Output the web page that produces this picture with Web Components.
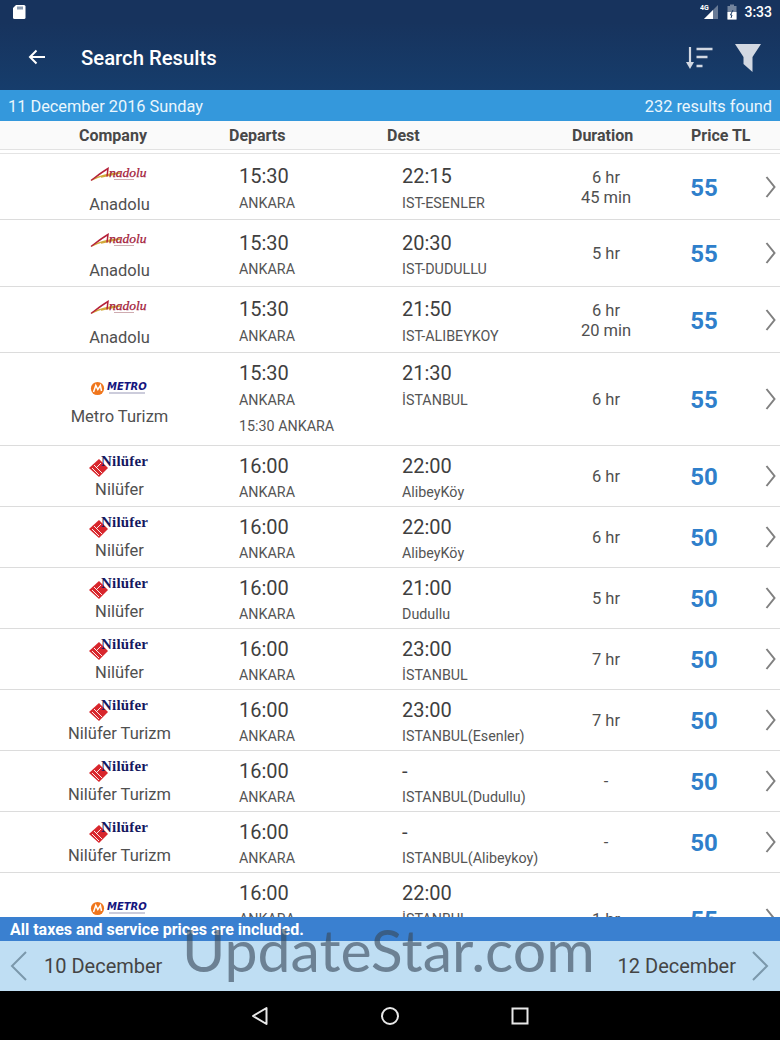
<!DOCTYPE html>
<html><head><meta charset="utf-8">
<style>
html,body{margin:0;padding:0;height:100%;background:#fff;font-family:Roboto,"Liberation Sans",sans-serif}
results-app{width:780px;height:1040px}
</style></head><body>
<results-app></results-app>
<script>
function def(name, css, html, setup){
  customElements.define(name, class extends HTMLElement{
    connectedCallback(){
      if(this.shadowRoot) return;
      const s=this.attachShadow({mode:'open'});
      const a=n=>this.getAttribute(n)??'';
      s.innerHTML='<style>'+css+'</style>'+(typeof html==='function'?html(a):html);
      if(setup) setup(s,this);
    }
  });
}
const logos={
 anadolu:`<svg width="62" height="20" viewBox="0 0 62 20"><path d="M3 15C12 10 20 8.500 31 8L12 12" fill="none" stroke="#d2a93a" stroke-width="1.300"/><path d="M2 15.500C8 11 13 7 19 3.500l-1 8" fill="none" stroke="#b5213a" stroke-width="1.500"/><text x="20" y="12" font-family="Liberation Serif" font-style="italic" font-size="13.500" fill="#a3203a" stroke="#a3203a" stroke-width=".25">nadolu</text><rect x="25" y="14" width="20" height=".9" fill="#c9a2a8"/></svg>`,
 metro:`<svg width="60" height="20" viewBox="0 0 60 20"><circle cx="7.500" cy="9.500" r="6.600" fill="#f0761c"/><path d="M3.500 13l2.300-6.500 2 4 2.600-4L11.500 12" fill="none" stroke="#fff" stroke-width="1.500"/><text x="17" y="11" font-family="DejaVu Sans" font-style="italic" font-weight="700" font-size="10" fill="#15157e">METRO</text><rect x="19" y="13.500" width="36" height="1" fill="#9a9ab8"/></svg>`,
 nilufer:`<svg width="64" height="30" viewBox="0 -4 64 30"><path d="M1 13L11 4l9 9-9 9z" fill="#d8262c"/><path d="M6 10l8 8M4 13l7 7M13 8l-5 5" stroke="#fff" stroke-width=".9"/><text x="13" y="10.500" font-family="Liberation Serif" font-weight="700" font-size="15" fill="#16185f" letter-spacing=".2">Nilüfer</text></svg>`
};
def('status-bar',`:host{display:flex;align-items:center;height:24px;padding:0 8px 0 12px;color:#fff;font-size:14px;font-weight:500}
 .sp{flex:1}svg{display:block}.b{margin-left:8px;margin-right:7px}`,
 `<svg width="14" height="16" viewBox="0 0 14 16"><path d="M4 1h8a1.500 1.500 0 0 1 1.500 1.500v11A1.500 1.500 0 0 1 12 15H2.500A1.500 1.500 0 0 1 1 13.500V4z" fill="#fff"/><path d="M6 2.500v3M8 2.500v3M10 2.500v3" stroke="#1a3a64" stroke-width="1"/></svg>
 <span class="sp"></span>
 <svg width="19" height="16" viewBox="0 0 19 16"><path d="M18 1v14H4z" fill="#fff" opacity=".35"/><path d="M13 6v9H4z" fill="#fff"/><text x="0" y="6" font-family="Roboto" font-size="7" font-weight="700" fill="#fff">4G</text></svg>
 <svg class="b" width="10" height="16" viewBox="0 0 10 16"><path d="M3 .5h4V2h2.500v13.500H.5V2H3z" fill="#fff" opacity=".4"/><path d="M.5 8h9v7.500h-9z" fill="#fff"/><path d="M6 6L3.500 11H5l-1 3" fill="none" stroke="#1a3a64" stroke-width="1"/></svg><span>3:33</span>`);
def('app-bar',`:host{display:flex;align-items:center;height:66px;padding:0 0 0 27px;color:#fff}
 .t{margin-left:34px;font-size:20.300px;font-weight:500;flex:1;position:relative;top:1px}
 svg{display:block}.s{margin-right:22px;position:relative;top:1px}.f{margin-right:19px;position:relative;top:1px}`,
 `<svg width="20" height="18" viewBox="0 0 20 18"><path d="M18 9H3M9.500 2.500L3 9l6.500 6.500" fill="none" stroke="#fff" stroke-width="2"/></svg>
 <span class="t">Search Results</span>
 <svg class="s" width="28" height="24" viewBox="0 0 28 24"><path d="M5 1v17" stroke="#d2d8e2" stroke-width="2.200"/><path d="M1 16h8l-4 7z" fill="#d2d8e2"/><path d="M11.500 3h16M11.500 11h11M11.500 20h6" stroke="#d2d8e2" stroke-width="2.600"/></svg>
 <svg class="f" width="26" height="30" viewBox="0 0 26 30"><path d="M0 1h26L17.500 14v15l-9-8V14z" fill="#d2d8e2"/></svg>`);
def('top-chrome',`:host{display:block;background:linear-gradient(#17335d 0,#17335d 22px,#163d6c 100%);}`,`<slot></slot>`);
def('date-bar',`:host{display:flex;justify-content:space-between;align-items:center;height:31px;box-sizing:border-box;padding:1px 8px 0;background:#3498dc;color:#eaf6fd;font-size:16.350px}`,
 a=>`<span>${a('date')}</span><span>${a('count')}</span>`);
def('col-header',`:host{display:grid;grid-template-columns:150px 158px 185px 119px auto;box-sizing:content-box;padding:1px 0 0 79px;height:27px;align-items:center;background:#fafafa;color:#484848;font-size:16px;font-weight:700;white-space:nowrap;border-bottom:1px solid #e2e2e2;margin-bottom:3px}`,
 `<span>Company</span><span>Departs</span><span>Dest</span><span>Duration</span><span>Price TL</span>`);
def('trip-row',`:host{display:grid;grid-template-columns:239px 163px 150px 108px 88px 32px;border-top:1px solid #dcdcdc;color:#444;box-sizing:border-box;overflow:hidden}
 :host([first]){border-top:1px solid #e4e4e4}
 .co{display:flex;flex-direction:column;align-items:center;font-size:16.500px;color:#505050;white-space:nowrap}
 .logo{height:20px;display:flex;align-items:center;margin-top:var(--lt,8px)}
 .nm{margin-top:var(--nt,11px);line-height:20px}
 .tm{font-size:20px;line-height:24px;margin-top:var(--tt,11px);color:#3f3f3f}
 .sb{font-size:14.300px;line-height:18px;margin-top:var(--sbt,5px);color:#555}
 .ex{font-size:14.300px;line-height:18px;margin-top:8px;color:#555}
 .du{display:flex;align-items:center;justify-content:center;text-align:center;font-size:16.500px;line-height:20px;color:#505050;padding-top:2px}
 .pr{display:flex;align-items:center;justify-content:center;font-size:24px;font-weight:700;color:#2f7fcb;padding-top:2px}
 .ch{display:flex;align-items:center;justify-content:flex-end;padding-right:4px}
 svg{display:block}`,
 a=>`<div class="co"><div class="logo">${logos[a('logo')]}</div><div class="nm">${a('name')}</div></div>
 <div><div class="tm">${a('dep')}</div><div class="sb">${a('from')}</div>${a('extra')?`<div class="ex">${a('extra')}</div>`:''}</div>
 <div><div class="tm">${a('arr')}</div><div class="sb">${a('to')}</div></div>
 <div class="du"><span>${a('dur')}</span></div>
 <div class="pr">${a('price')}</div>
 <div class="ch"><svg width="11" height="22" viewBox="0 0 11 22"><path d="M1.500 1L9.500 11l-8 10" fill="none" stroke="#808080" stroke-width="2"/></svg></div>`,
 (s,h)=>{
   const H=+h.getAttribute('h');
   h.style.height=H+'px';
   h.style.setProperty('--tt',(h.getAttribute('tt')||8)+'px');
   h.style.setProperty('--sbt',(h.getAttribute('sbt')||5)+'px');
   h.style.setProperty('--lt',H>=90?'26px':H>=66?'11px':'10px');
   h.style.setProperty('--nt',H>=90?'8px':H>=66?'10px':'4px');
 });
def('result-list',`:host{display:block;flex:1;min-height:0;overflow:hidden;background:#fff}`,`<slot></slot>`);
def('tax-note',`:host{display:flex;align-items:center;height:24px;padding:0 10px;background:#3a80d0;color:#fff;font-size:16px;font-weight:700}`,`<slot></slot>`);
def('day-nav',`:host{display:flex;align-items:center;height:50px;background:#bfdef3;color:#444;font-size:20px;padding:0 11px 0 10px}
 svg{display:block}.l{margin-left:17px;flex:1;white-space:nowrap}.r{margin-right:16px}`,
 a=>`<svg width="17" height="30" viewBox="0 0 17 30"><path d="M16 1L2 15l14 14" fill="none" stroke="#7b98ab" stroke-width="2"/></svg>
 <span class="l">${a('prev')}</span><span class="r">${a('next')}</span>
 <svg width="17" height="30" viewBox="0 0 17 30"><path d="M1 1l14 14L1 29" fill="none" stroke="#7b98ab" stroke-width="2"/></svg>`);
def('nav-bar',`:host{display:flex;align-items:center;justify-content:center;gap:111px;height:49px;background:#000}
 svg{display:block}`,
 `<svg width="18" height="20" viewBox="0 0 18 20"><path d="M15.500 2v16L2 10z" fill="none" stroke="#e8e8e8" stroke-width="2" stroke-linejoin="round"/></svg>
 <svg width="20" height="20" viewBox="0 0 20 20"><circle cx="10" cy="10" r="8" fill="none" stroke="#e8e8e8" stroke-width="2"/></svg>
 <svg width="18" height="18" viewBox="0 0 18 18"><rect x="1.500" y="1.500" width="15" height="15" fill="none" stroke="#e8e8e8" stroke-width="2"/></svg>`);
def('water-mark',`:host{position:absolute;left:182px;top:908px;font-family:Lato,sans-serif;font-size:59px;line-height:84px;color:rgba(56,72,88,.62);white-space:nowrap;pointer-events:none}`,`<slot></slot>`);
const rows=[
 ['anadolu','Anadolu','15:30','ANKARA','22:15','IST-ESENLER','6 hr<br>45 min','55',66,'first',10,'',6],
 ['anadolu','Anadolu','15:30','ANKARA','20:30','IST-DUDULLU','5 hr','55',67,'',11,'',5],
 ['anadolu','Anadolu','15:30','ANKARA','21:50','IST-ALIBEYKOY','6 hr<br>20 min','55',66,'',10,'',6],
 ['metro','Metro Turizm','15:30','ANKARA','21:30','İSTANBUL','6 hr','55',93,'',8,'15:30 ANKARA',6],
 ['nilufer','Nilüfer','16:00','ANKARA','22:00','AlibeyKöy','6 hr','50',61,'',8],
 ['nilufer','Nilüfer','16:00','ANKARA','22:00','AlibeyKöy','6 hr','50',61,'',8],
 ['nilufer','Nilüfer','16:00','ANKARA','21:00','Dudullu','5 hr','50',61,'',8],
 ['nilufer','Nilüfer','16:00','ANKARA','23:00','İSTANBUL','7 hr','50',61,'',8],
 ['nilufer','Nilüfer Turizm','16:00','ANKARA','23:00','ISTANBUL(Esenler)','7 hr','50',61,'',8],
 ['nilufer','Nilüfer Turizm','16:00','ANKARA','-','ISTANBUL(Dudullu)','-','50',61,'',8],
 ['nilufer','Nilüfer Turizm','16:00','ANKARA','-','ISTANBUL(Alibeykoy)','-','50',61,'',8],
 ['metro','Metro Turizm','16:00','ANKARA','22:00','İSTANBUL','1 hr','55',93,'',8],
];
const attr=s=>String(s).replace(/"/g,'&quot;');
const rowsHtml=rows.map(r=>`<trip-row logo="${r[0]}" name="${r[1]}" dep="${r[2]}" from="${r[3]}" arr="${r[4]}" to="${r[5]}" dur="${attr(r[6])}" price="${r[7]}" h="${r[8]}" ${r[9]||''} tt="${r[10]}" sbt="${r[12]||5}" extra="${r[11]||''}"></trip-row>`).join('');
def('results-app',`:host{display:flex;flex-direction:column;position:relative;overflow:hidden}`,
 `<top-chrome><status-bar></status-bar><app-bar></app-bar></top-chrome>
 <date-bar date="11 December 2016 Sunday" count="232 results found"></date-bar>
 <col-header></col-header>
 <result-list>${rowsHtml}</result-list>
 <tax-note>All taxes and service prices are included.</tax-note>
 <day-nav prev="10 December" next="12 December"></day-nav>
 <nav-bar></nav-bar>
 <water-mark>UpdateStar.com</water-mark>`);
</script>
</body></html>
